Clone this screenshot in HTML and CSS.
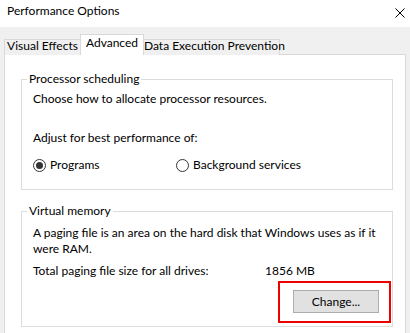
FILE: index.html
```html
<!DOCTYPE html>
<html lang="en">
<head>
    <meta charset="UTF-8">
    <title>Performance Options</title>
    <link rel="stylesheet" href="styles.css">
</head>
<body>
    <div class="titlebar">
        <span class="title">Performance Options</span>
        <svg class="close" width="10" height="10" viewBox="0 0 10 10">
            <path d="M0.5 0.5L9.5 9.5M9.5 0.5L0.5 9.5" stroke="#000" stroke-width="1" fill="none"/>
        </svg>
    </div>

    <div class="tabs">
        <div class="tab tab-visual">Visual Effects</div>
        <div class="tab tab-advanced active">Advanced</div>
        <div class="tab tab-dep">Data Execution Prevention</div>
    </div>

    <div class="panel">
        <fieldset class="group">
            <legend>Processor scheduling</legend>
            <p class="intro">Choose how to allocate processor resources.</p>
            <p class="adjust">Adjust for best performance of:</p>
            <div class="radios">
                <label class="radio radio-first"><span class="dot checked"></span>Programs</label>
                <label class="radio"><span class="dot"></span>Background services</label>
            </div>
        </fieldset>

        <fieldset class="group group-vm">
            <legend>Virtual memory</legend>
            <p class="desc">A paging file is an area on the hard disk that Windows uses as if it<br>were RAM.</p>
            <div class="total">
                <span class="total-label">Total paging file size for all drives:</span>
                <span>1856 MB</span>
            </div>
            <div class="actions">
                <div class="highlight">
                    <button class="btn">Change...</button>
                </div>
            </div>
        </fieldset>
    </div>
</body>
</html>
```

FILE: styles.css
```css
body {
    margin: 0;
    height: 333px;
    overflow: hidden;
    background-color: #f0f0f0;
    font-family: Lato, "Noto Sans", sans-serif;
    font-size: 12px;
    line-height: 16px;
    color: #000;
}

.titlebar {
    height: 27px;
    box-sizing: border-box;
    padding: 3px 5px 0 7px;
    background-color: #ffffff;
    display: flex;
    justify-content: space-between;
    align-items: flex-start;
}

.close {
    margin-top: 5px;
}

/* tab strip */
.tabs {
    display: flex;
    align-items: flex-end;
    height: 21px;
    margin: 7px 0 -1px 0;
    padding-left: 4px;
}

.tab {
    box-sizing: border-box;
    height: 16px;
    border: 1px solid #d9d9d9;
    border-bottom: none;
    background-color: #f0f0f0;
    line-height: 12px;
    text-align: center;
    white-space: nowrap;
}

.tab-visual {
    width: 77px;
}

.tab-advanced {
    width: 64px;
    margin-left: -1px;
}

.tab-dep {
    width: 137px;
    margin-left: -1px;
}

.tab.active {
    position: relative;
    height: 21px;
    padding-top: 2px;
    background-color: #ffffff;
}

/* page body, runs on below the window edge */
.panel {
    box-sizing: border-box;
    height: 279px;
    margin: 0 4px;
    padding: 16px 12px 0 16px;
    border: 1px solid #d9d9d9;
    border-bottom: none;
    background-color: #ffffff;
}

.group {
    margin: 0;
    min-width: 0;
    padding: 0 1px 16px 11px;
    border: 1px solid #dcdcdc;
}

.group legend {
    margin-left: -6px;
    padding: 0 2px;
    line-height: 16px;
}

.group p {
    margin: 0;
}

.intro {
    margin-top: 4px !important;
}

.adjust {
    margin-top: 23px !important;
}

.radios {
    display: flex;
    margin-top: 11px;
}

.radio {
    display: flex;
    align-items: center;
    gap: 4px;
}

.radio-first {
    width: 143px;
}

.dot {
    width: 13px;
    height: 13px;
    box-sizing: border-box;
    border: 1px solid #333333;
    border-radius: 50%;
    display: flex;
    justify-content: center;
    align-items: center;
}

.dot.checked::after {
    content: "";
    width: 7px;
    height: 7px;
    border-radius: 50%;
    background-color: #333333;
}

.group-vm {
    margin-top: 13px;
    padding-bottom: 3px;
}

.desc {
    margin-top: 6px !important;
}

.total {
    display: flex;
    margin-top: 6px;
}

.total-label {
    width: 232px;
}

.actions {
    display: flex;
    justify-content: flex-end;
    margin-top: 2px;
}

.highlight {
    padding: 7px 10px 8px 13px;
    border: 2px solid #ee0000;
}

.btn {
    display: block;
    width: 86px;
    height: 23px;
    padding: 0;
    border: 1px solid #adadad;
    background-color: #e1e1e1;
    font-family: inherit;
    font-size: 12px;
    color: #000;
}
```
